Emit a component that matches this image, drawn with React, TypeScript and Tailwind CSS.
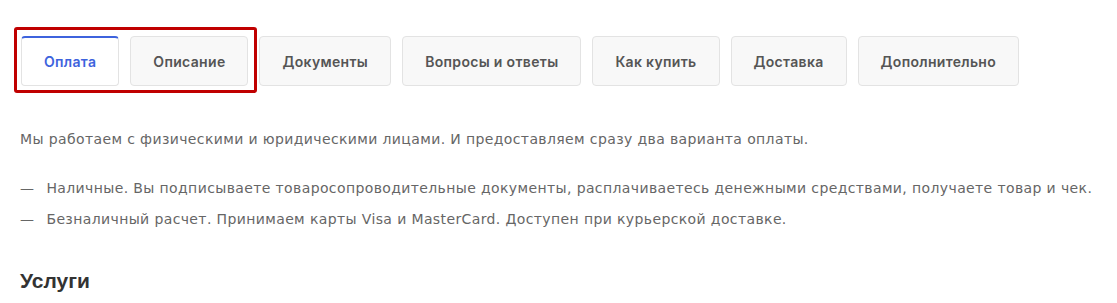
import { useState } from 'react'

const TABS = ['Оплата', 'Описание', 'Документы', 'Вопросы и ответы', 'Как купить', 'Доставка', 'Дополнительно']

function Tab({ label, active, onClick }: { label: string; active: boolean; onClick: () => void }) {
  return (
    <button
      onClick={onClick}
      className={
        active
          ? 'h-[50px] px-[22px] rounded-[4px] border border-[#e3e3e3] border-t-2 border-t-[#3d63dd] bg-white text-[14px] font-semibold tracking-[0.32px] text-[#3d63dd]'
          : 'h-[50px] px-[22px] rounded-[4px] border border-[#e3e3e3] bg-[#f8f8f8] text-[14px] font-semibold tracking-[0.32px] text-[#555]'
      }
      style={{ fontFamily: 'Inter, sans-serif' }}
    >
      {label}
    </button>
  )
}

export default function App() {
  const [active, setActive] = useState(0)

  return (
    <div className="w-[1117px] h-[303px] bg-white overflow-hidden px-[21px]" style={{ fontFamily: '"DejaVu Sans", sans-serif' }}>
      <div className="relative flex items-center gap-[11px] pt-[36px]">
        {TABS.map((t, i) => (
          <Tab key={t} label={t} active={active === i} onClick={() => setActive(i)} />
        ))}
        {/* highlight frame around the first two tabs */}
        <div className="absolute left-[-7px] top-[27px] w-[243px] h-[66px] border-[3px] border-[#c00000] rounded-[3px] pointer-events-none" />
      </div>

      <div className="text-[14px] text-[#666] leading-[20px] tracking-[0.38px] -ml-[1px]">
        <p className="mt-[43px]">
          Мы работаем с физическими и юридическими лицами. И предоставляем сразу два варианта оплаты.
        </p>
        <ul className="mt-[29px] flex flex-col gap-[11px]">
          <li className="flex gap-[12px]">
            <span>—</span>
            <span>Наличные. Вы подписываете товаросопроводительные документы, расплачиваетесь денежными средствами, получаете товар и чек.</span>
          </li>
          <li className="flex gap-[12px]">
            <span>—</span>
            <span>Безналичный расчет. Принимаем карты Visa и MasterCard. Доступен при курьерской доставке.</span>
          </li>
        </ul>
      </div>

      <h2 className="mt-[36px] -ml-[1px] text-[21px] font-bold text-[#333]" style={{ fontFamily: '"Liberation Sans", Arial, sans-serif' }}>
        Услуги
      </h2>
    </div>
  )
}
